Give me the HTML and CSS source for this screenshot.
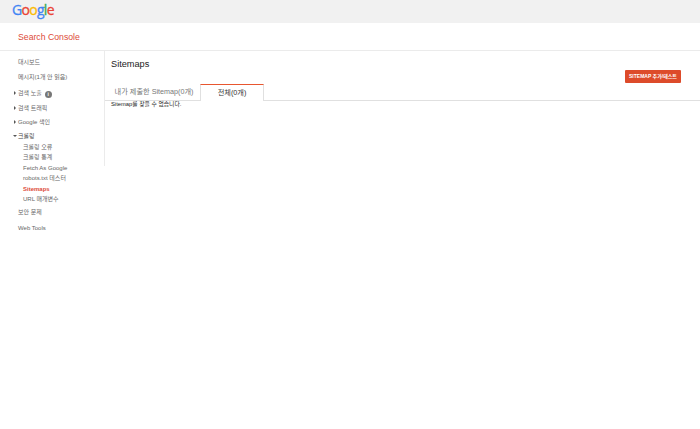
FILE: index.html
```html
<!DOCTYPE html>
<html lang="ko">
<head>
<meta charset="utf-8">
<title>Sitemaps - Search Console</title>
<link rel="stylesheet" href="styles.css">
</head>
<body>
<header class="topbar">
  <div class="logo"><span class="blue">G</span><span class="red">o</span><span class="yellow">o</span><span class="blue">g</span><span class="green">l</span><span class="red">e</span></div>
</header>
<div class="brandbar"><span class="brand">Search Console</span></div>
<div class="layout">
  <nav class="sidebar">
    <a class="item first">대시보드</a>
    <a class="item msg">메시지(1개 안 읽음)</a>
    <a class="item sec"><i class="arrow"></i>검색 노출<b class="info">i</b></a>
    <a class="item sec"><i class="arrow"></i>검색 트래픽</a>
    <a class="item sec"><i class="arrow"></i>Google 색인</a>
    <a class="item sec open"><i class="arrow down"></i>크롤링</a>
    <div class="sub">
      <a>크롤링 오류</a>
      <a>크롤링 통계</a>
      <a>Fetch As Google</a>
      <a>robots.txt 테스터</a>
      <a class="active">Sitemaps</a>
      <a>URL 매개변수</a>
    </div>
    <a class="item security">보안 문제</a>
    <a class="item tools">Web Tools</a>
  </nav>
  <main class="content">
    <div class="titlerow">
      <h1>Sitemaps</h1>
      <button class="action">SITEMAP 추가/테스트</button>
    </div>
    <div class="tabs">
      <div class="tab">내가 제출한 Sitemap(0개)</div>
      <div class="tab selected">전체(0개)</div>
    </div>
    <p class="empty">Sitemap를 찾을 수 없습니다.</p>
  </main>
</div>
</body>
</html>
```
FILE: styles.css
```css
* { box-sizing: border-box; }
html, body { margin: 0; height: 100%; background: #fff; }
body {
  font-family: "Liberation Sans", "Noto Sans CJK KR", sans-serif;
  color: #555;
  overflow: hidden;
}
.topbar { height: 23px; background: #f1f1f1; padding: 0 0 0 12px; }
.logo {
  font-family: "Open Sans", sans-serif;
  font-size: 14px;
  line-height: 20px;
  letter-spacing: -0.7px;
  -webkit-text-stroke: 0.3px;
}
.blue { color: #4285f4; }
.red { color: #ea4335; }
.yellow { color: #fbbc05; }
.green { color: #34a853; }
.brandbar {
  height: 28px;
  border-bottom: 1px solid #ebebeb;
  padding: 8px 0 0 18px;
}
.brand { display: block; font-size: 8.7px; line-height: 12px; color: #dd4b39; }
.layout { display: flex; align-items: flex-start; }
.sidebar {
  width: 105px;
  height: 115px;
  flex: none;
  border-right: 1px solid #ebebeb;
  font-size: 6px;
  line-height: 8px;
  color: #666;
}
.item { display: block; padding-left: 18px; position: relative; white-space: nowrap; }
.first { margin-top: 7px; }
.msg { margin-top: 7px; }
.sec { margin-top: 6px; }
.msg + .sec { margin-top: 7.5px; }
.open { color: #444; }
.arrow {
  position: absolute;
  left: 14px;
  top: 2px;
  border-left: 2px solid #555;
  border-top: 2px solid transparent;
  border-bottom: 2px solid transparent;
}
.arrow.down {
  left: 13px;
  top: 3px;
  border-top: 2px solid #555;
  border-left: 2px solid transparent;
  border-right: 2px solid transparent;
  border-bottom: 0;
}
.info {
  display: inline-block;
  width: 7px;
  height: 7px;
  margin-left: 3px;
  border-radius: 50%;
  background: #777;
  color: #fff;
  font-size: 5px;
  line-height: 7px;
  text-align: center;
  vertical-align: -1px;
}
.sub { display: flex; flex-direction: column; gap: 2.6px; margin-top: 3px; padding-left: 23px; white-space: nowrap; }
.sub a { display: block; }
.sub .active { color: #dd4b39; font-weight: bold; }
.security { margin-top: 5px; }
.tools { margin-top: 7.5px; }
.content { flex: 1; padding: 0 19px 0 6px; }
.titlerow { position: relative; height: 33px; }
h1 { margin: 0; padding-top: 7px; font-size: 9.2px; line-height: 12px; font-weight: normal; color: #222; }
.action {
  position: absolute;
  right: 0;
  top: 19px;
  width: 56px;
  height: 13px;
  padding: 0;
  border: 0;
  border-radius: 1px;
  background: #dd4b2a;
  color: #fff;
  font: bold 5px/13px "Liberation Sans", "Noto Sans CJK KR", sans-serif;
}
.tabs {
  display: flex;
  height: 17px;
  margin: 0 -19px 0 -6px;
  padding-left: 6px;
  border-bottom: 1px solid #e0e0e0;
}
.tab {
  width: 89px;
  padding-right: 3px;
  font-size: 7.2px;
  line-height: 15px;
  text-align: center;
  color: #777;
  white-space: nowrap;
}
.selected {
  width: 64px;
  height: 17px;
  padding-right: 0;
  background: #fff;
  color: #333;
  border: 1px solid #e0e0e0;
  border-top: 1px solid #e8562f;
  border-bottom: 0;
}
.empty { margin: -1px 0 0; font-size: 5.8px; line-height: 8px; color: #222; }
```
